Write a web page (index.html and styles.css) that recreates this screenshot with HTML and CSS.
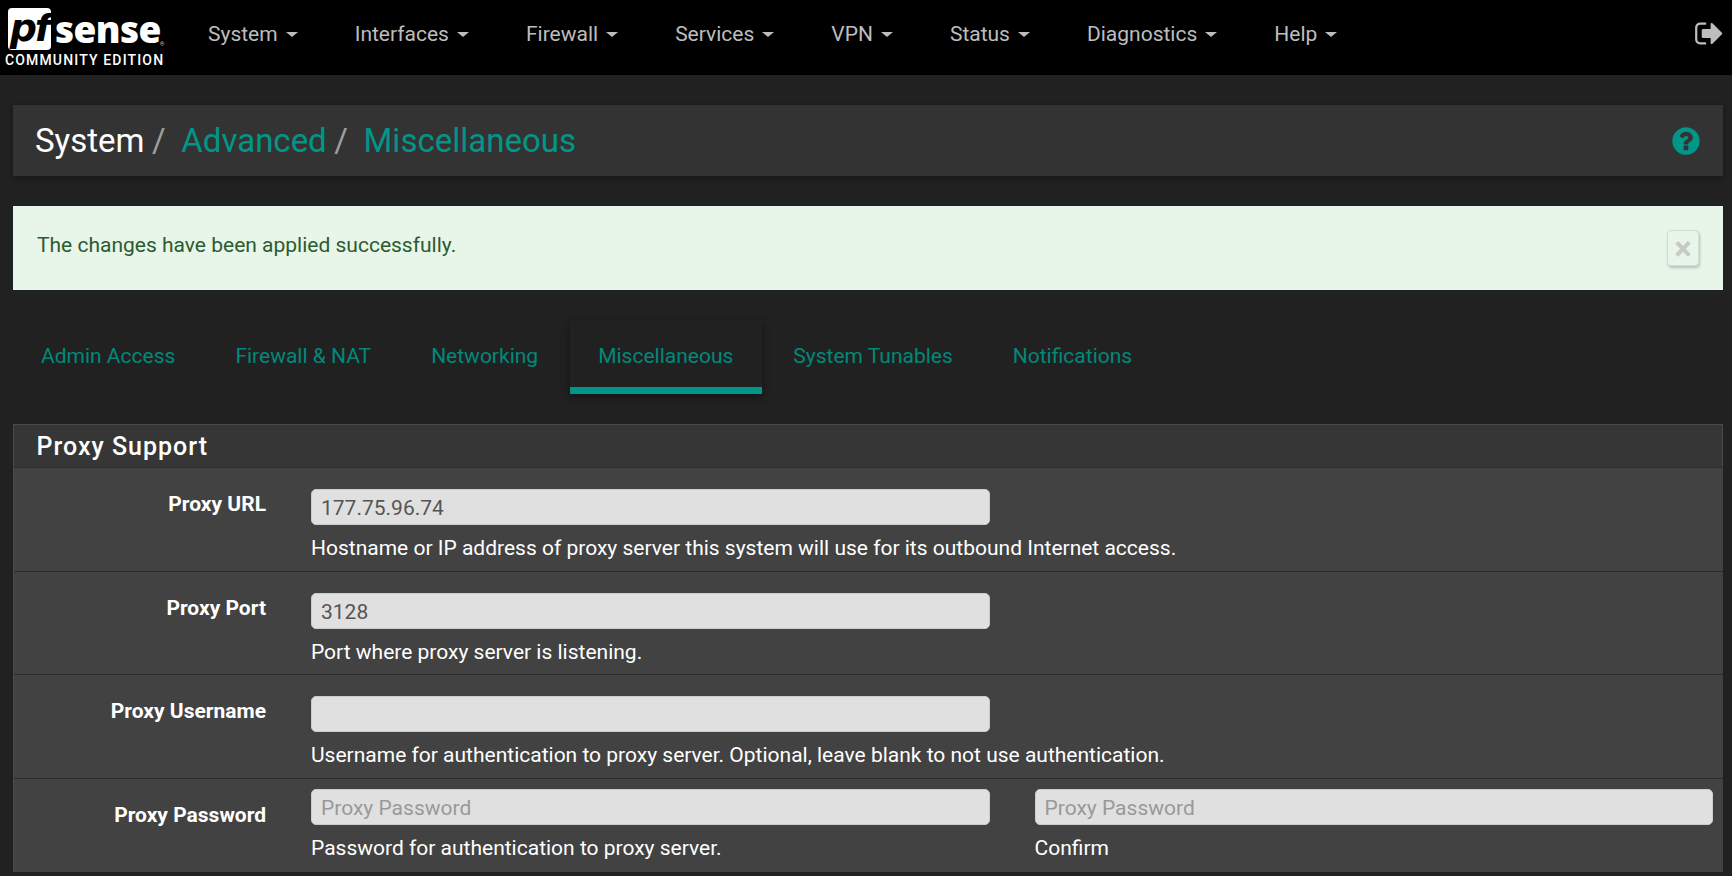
FILE: index.html
```html
<!DOCTYPE html>
<html lang="en">
<head>
    <meta charset="UTF-8">
    <title>pfSense - System: Advanced: Miscellaneous</title>
    <link rel="stylesheet" href="styles.css">
</head>
<body>

<nav class="navbar">
    <div class="logo">
        <div class="logo-mark">
            <span class="logo-pf">pf</span>
            <span class="logo-sense">sense</span>
            <span class="logo-reg">®</span>
        </div>
        <div class="logo-edition">COMMUNITY EDITION</div>
    </div>
    <ul class="nav-menu">
        <li class="nav-item">System<span class="caret"></span></li>
        <li class="nav-item">Interfaces<span class="caret"></span></li>
        <li class="nav-item">Firewall<span class="caret"></span></li>
        <li class="nav-item">Services<span class="caret"></span></li>
        <li class="nav-item">VPN<span class="caret"></span></li>
        <li class="nav-item">Status<span class="caret"></span></li>
        <li class="nav-item">Diagnostics<span class="caret"></span></li>
        <li class="nav-item">Help<span class="caret"></span></li>
    </ul>
    <svg class="logout-icon" viewBox="0 0 1792 1792"><path d="M704 1440q0 4 1 20t.5 26.5-3 23.5-10 19.5-20.5 6.5h-320q-119 0-203.5-84.5t-84.5-203.5v-704q0-119 84.5-203.5t203.5-84.5h320q13 0 22.5 9.5t9.5 22.5q0 4 1 20t.5 26.5-3 23.5-10 19.5-20.5 6.5h-320q-66 0-113 47t-47 113v704q0 66 47 113t113 47h312l11.5 1 11.5 3 8 5.5 7 9 2 13.5zm928-544q0 26-19 45l-544 544q-19 19-45 19t-45-19-19-45v-288h-448q-26 0-45-19t-19-45v-384q0-26 19-45t45-19h448v-288q0-26 19-45t45-19 45 19l544 544q19 19 19 45z"/></svg>
</nav>

<main class="content">
    <header class="page-header">
        <h1 class="breadcrumb">
            <span class="crumb-current">System</span><span class="crumb-sep">/</span>
            <a class="crumb-link">Advanced</a><span class="crumb-sep">/</span>
            <a class="crumb-link">Miscellaneous</a>
        </h1>
        <svg class="help-icon" viewBox="0 0 1792 1792"><path d="M1024 1376v-192q0-14-9-23t-23-9h-192q-14 0-23 9t-9 23v192q0 14 9 23t23 9h192q14 0 23-9t9-23zm256-672q0-88-55.5-163t-138.5-116-170-41q-243 0-371 213-15 24 8 42l132 100q7 6 19 6 16 0 25-12 53-68 86-92 34-24 86-24 48 0 85.5 26t37.5 59q0 38-20 61t-68 45q-63 28-115.5 86.5t-52.5 125.5v36q0 14 9 23t23 9h192q14 0 23-9t9-23q0-19 21.5-49.5t54.5-49.5q32-18 49-28.5t46-35 44.5-48 28-60.5 12.5-81zm384 192q0 209-103 385.5t-279.5 279.5-385.5 103-385.5-103-279.5-279.5-103-385.5 103-385.5 279.5-279.5 385.5-103 385.5 103 279.5 279.5 103 385.5z"/></svg>
    </header>

    <div class="alert">
        <span>The changes have been applied successfully.</span>
        <button class="alert-close">×</button>
    </div>

    <ul class="tabs">
        <li class="tab">Admin Access</li>
        <li class="tab">Firewall &amp; NAT</li>
        <li class="tab">Networking</li>
        <li class="tab active">Miscellaneous</li>
        <li class="tab">System Tunables</li>
        <li class="tab">Notifications</li>
    </ul>

    <section class="panel">
        <h2 class="panel-title">Proxy Support</h2>

        <div class="form-row">
            <label class="form-label">Proxy URL</label>
            <div class="form-field">
                <input class="form-input" type="text" value="177.75.96.74">
                <p class="help-text">Hostname or IP address of proxy server this system will use for its outbound Internet access.</p>
            </div>
        </div>

        <div class="form-row">
            <label class="form-label">Proxy Port</label>
            <div class="form-field">
                <input class="form-input" type="text" value="3128">
                <p class="help-text">Port where proxy server is listening.</p>
            </div>
        </div>

        <div class="form-row">
            <label class="form-label">Proxy Username</label>
            <div class="form-field">
                <input class="form-input" type="text">
                <p class="help-text">Username for authentication to proxy server. Optional, leave blank to not use authentication.</p>
            </div>
        </div>

        <div class="form-row tight">
            <label class="form-label">Proxy Password</label>
            <div class="form-field">
                <input class="form-input" type="text" placeholder="Proxy Password">
                <p class="help-text">Password for authentication to proxy server.</p>
            </div>
            <div class="form-field">
                <input class="form-input" type="text" placeholder="Proxy Password">
                <p class="help-text">Confirm</p>
            </div>
        </div>
    </section>
</main>

</body>
</html>
```

FILE: styles.css
```css
* {
    box-sizing: border-box;
}

html,
body {
    height: 876px;
    overflow: hidden;
}

body {
    margin: 0;
    background: #212121;
    color: #fff;
    font-family: Roboto, "Liberation Sans", sans-serif;
    font-size: 21px;
}

ul {
    margin: 0;
    padding: 0;
    list-style: none;
}

/* top bar */
.navbar {
    display: flex;
    align-items: center;
    height: 75px;
    background: #000;
}

.logo {
    width: 208px;
    flex-shrink: 0;
    padding: 0 0 0 5px;
}

.logo-mark {
    display: flex;
    align-items: center;
    height: 43px;
    padding-left: 3px;
}

.logo-pf {
    width: 43px;
    height: 42px;
    background: #fff;
    border-radius: 4px;
    color: #000;
    font-family: "DejaVu Sans", sans-serif;
    font-size: 38px;
    font-weight: 700;
    font-style: italic;
    line-height: 40px;
    text-align: center;
    letter-spacing: -2px;
    white-space: nowrap;
}

.logo-sense {
    margin-left: 4px;
    font-family: "Open Sans", sans-serif;
    font-size: 37px;
    font-weight: 800;
    line-height: 42px;
    letter-spacing: -0.6px;
}

.logo-reg {
    align-self: flex-end;
    margin: 0 0 4px -1px;
    font-size: 6px;
    color: #bbb;
}

.logo-edition {
    margin-top: 1px;
    font-size: 14px;
    font-weight: 500;
    line-height: 16px;
    letter-spacing: 1.15px;
    white-space: nowrap;
}

.nav-menu {
    display: flex;
    flex: 1;
    gap: 57px;
    padding-bottom: 7px;
    color: #bdbdbd;
}

.nav-item {
    display: flex;
    align-items: center;
}

.caret {
    margin-left: 8px;
    border-top: 5px solid #bdbdbd;
    border-left: 6px solid transparent;
    border-right: 6px solid transparent;
}

.logout-icon {
    width: 31px;
    height: 31px;
    margin: 0 7px 8px 0;
    fill: #bdbdbd;
}

/* page content */
.content {
    padding: 30px 9px 0 13px;
}

.page-header {
    display: flex;
    align-items: center;
    justify-content: space-between;
    height: 71px;
    padding: 0 21px 0 22px;
    background: #333;
    box-shadow: 0 2px 6px rgba(0, 0, 0, 0.3);
}

.breadcrumb {
    margin: 0;
    font-size: 33px;
    font-weight: 400;
}

.crumb-current {
    color: #fff;
}

.crumb-link {
    color: #009688;
}

.crumb-sep {
    margin: 0 7.5px;
    color: #9e9e9e;
}

.help-icon {
    width: 32px;
    height: 32px;
    fill: #009688;
}

.alert {
    display: flex;
    align-items: center;
    justify-content: space-between;
    height: 84px;
    margin-top: 30px;
    padding: 0 24px 0 24px;
    background: #e8f5e9;
    color: #2b5b2e;
}

.alert span {
    padding-bottom: 6px;
}

.alert-close {
    display: flex;
    align-items: center;
    justify-content: center;
    width: 32px;
    height: 36px;
    padding: 0;
    background: #e8f5e9;
    border: 1px solid #d2dcd2;
    border-radius: 4px;
    box-shadow: 1px 2px 3px rgba(0, 0, 0, 0.2);
    color: #c4cbc4;
    font-family: Roboto, sans-serif;
    font-size: 33px;
    font-weight: 700;
    line-height: 1;
}

.tabs {
    display: flex;
    gap: 3px;
    height: 74px;
    margin: 30px 0 0 -0.5px;
    color: #00897b;
}

.tab {
    padding: 19px 28.5px 0;
    line-height: 34px;
}

.tab.active {
    background: #212121;
    border-bottom: 7px solid #009688;
    box-shadow: 0 3px 8px rgba(0, 0, 0, 0.45);
}

/* form panel */
.panel {
    margin-top: 30px;
    background: #424242;
    border-left: 1px solid #4a4a4a;
}

.panel-title {
    height: 44px;
    margin: 0;
    padding: 0 0 0 22.5px;
    background: #363636;
    border-top: 1px solid #4a4a4a;
    border-right: 1px solid #4a4a4a;
    border-bottom: 1px solid #2b2b2b;
    font-size: 25px;
    font-weight: 500;
    line-height: 43px;
    letter-spacing: 1px;
}

.form-row {
    display: grid;
    grid-template-columns: 252px minmax(0, 1fr) minmax(0, 1fr);
    column-gap: 45px;
    padding-right: 10px;
    border-bottom: 1px solid #2b2b2b;
}

.form-row.tight {
    border-bottom: 0;
}

.form-label {
    padding-top: 22px;
    font-weight: 700;
    line-height: 28px;
    text-align: right;
}

.form-field {
    padding: 21px 0 8.5px;
}

.tight .form-field {
    padding: 10px 0 10px;
}

.form-input {
    display: block;
    width: 100%;
    height: 36px;
    padding: 2px 10px 0 9px;
    background: #e0e0e0;
    border: 1px solid #ccc;
    border-radius: 5px;
    color: #555;
    font-family: Roboto, sans-serif;
    font-size: 21px;
}

.form-input::placeholder {
    color: #999;
}

.help-text {
    margin: 9px 0 0;
    line-height: 28px;
    white-space: nowrap;
}
```
